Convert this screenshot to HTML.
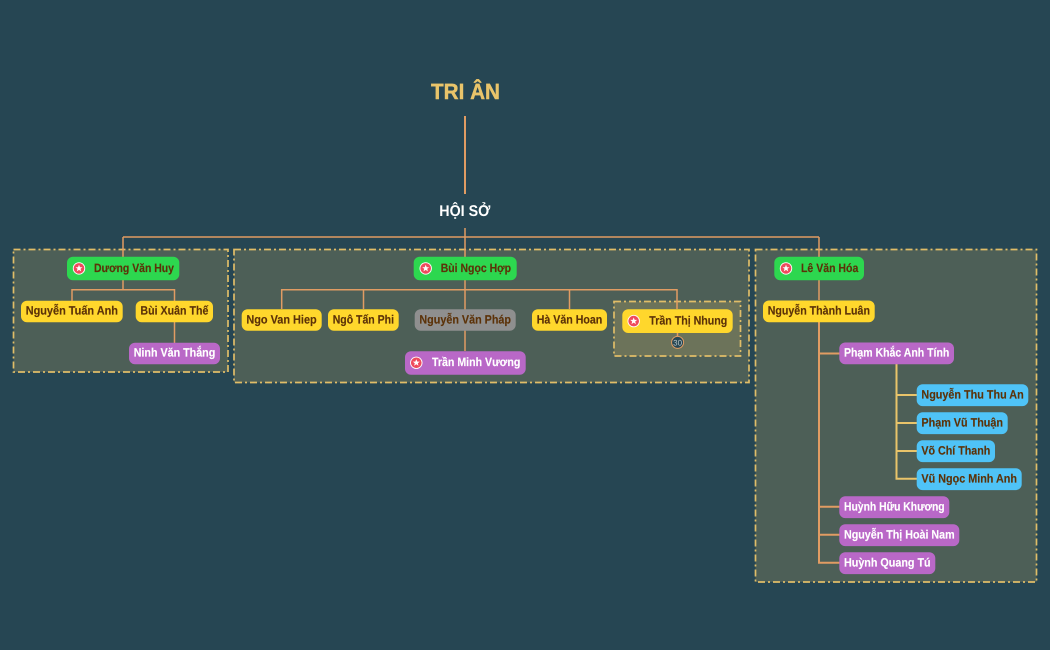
<!DOCTYPE html>
<html lang="vi"><head><meta charset="utf-8"><title>Tri Ân</title>
<style>
html,body{margin:0;padding:0;background:#264653;width:1050px;height:650px;overflow:hidden}
svg{display:block}
text{font-family:"Liberation Sans","DejaVu Sans",sans-serif;font-weight:700;text-rendering:geometricPrecision}
.n{font-size:12px;fill:#5c3208;stroke:#5c3208;stroke-width:.15px}
.w{font-size:12px;fill:#fff;stroke:#fff;stroke-width:.15px}
</style></head><body>
<svg width="1050" height="650" viewBox="0 0 1050 650" xmlns="http://www.w3.org/2000/svg">
<defs>
<g id="ic"><circle r="6.2" fill="#fff"/><circle r="5.300" fill="#ef4a5c"/><polygon points="0,-3.6 1,-1.2 3.500,-1.2 1.500,0.4 2.200,3 0,1.500 -2.200,3 -1.500,0.4 -3.500,-1.2 -1,-1.2" fill="#fff"/></g>
</defs>
<rect width="1050" height="650" fill="#264653"/>

<g fill="#e9c46a" fill-opacity=".2" stroke="#e0bd68" stroke-width="1.700" stroke-dasharray="7 3 2 3">
<rect x="13.500" y="249.500" width="214.500" height="122.500"/>
<rect x="234" y="249.500" width="515" height="133"/>
<rect x="755.500" y="249.500" width="281" height="332.500"/>
<rect x="614" y="301.500" width="126.500" height="54.500"/>
</g>

<g fill="none" stroke="#e19c63" stroke-width="1.500">
<path d="M465 116V194" stroke-width="2"/>
<path d="M465 228V257M123 237H819M123 237V257M819 237V257"/>
<path d="M123 280V290M72 301V289.700H174.500V301M174.500 322V343"/>
<path d="M465 280V351M281.700 309V289.700H677V309M363.500 289.700V309M569.500 289.700V309"/>
<path d="M677.500 333V337"/>
<path d="M819 280V300"/>
<path d="M819 322V562.700H839.500M819 353.500H839.500M819 506.700H839.500M819 534.700H839.500" stroke-width="2"/>
<path d="M896.500 364V478.700H917M896.500 395H917M896.500 423H917M896.500 451H917" stroke="#e9c46a" stroke-width="2"/>
</g>

<text x="431" y="99" font-size="22" fill="#e9c46a" stroke="#e9c46a" stroke-width=".4" textLength="69" lengthAdjust="spacingAndGlyphs">TRI ÂN</text>
<text x="439.300" y="216.200" font-size="15.500" fill="#fff" textLength="51" lengthAdjust="spacingAndGlyphs">HỘI SỞ</text>

<!-- green -->
<g fill="#2dd74f">
<rect x="67" y="256.700" width="112.300" height="23.600" rx="6"/>
<rect x="413.700" y="256.700" width="103" height="23.600" rx="6"/>
<rect x="774.300" y="256.700" width="89.700" height="23.600" rx="6"/>
</g>
<!-- yellow -->
<g fill="#ffd72c">
<rect x="21" y="300.700" width="101.700" height="21.600" rx="6"/>
<rect x="135.700" y="300.700" width="77.300" height="21.600" rx="6"/>
<rect x="241.700" y="309.300" width="80" height="21.400" rx="6"/>
<rect x="328" y="309.300" width="70.700" height="21.400" rx="6"/>
<rect x="532" y="309.300" width="75" height="21.400" rx="6"/>
<rect x="622.300" y="309.300" width="110.400" height="23.700" rx="6"/>
<rect x="763" y="300.500" width="111.700" height="21.800" rx="6"/>
</g>
<rect x="414.700" y="309.300" width="101" height="21.400" rx="6" fill="#8f8f8f"/>
<!-- purple -->
<g fill="#b968c7">
<rect x="129" y="342.700" width="91" height="21.600" rx="6"/>
<rect x="405" y="351.300" width="120.700" height="23.400" rx="6"/>
<rect x="839.300" y="342.500" width="114.700" height="21.800" rx="6"/>
<rect x="839.300" y="496.300" width="110" height="21.800" rx="6"/>
<rect x="839.300" y="524.300" width="120" height="21.800" rx="6"/>
<rect x="839.300" y="552.300" width="96" height="21.800" rx="6"/>
</g>
<!-- blue -->
<g fill="#4fc3f7">
<rect x="916.700" y="384.300" width="111.600" height="21.800" rx="6"/>
<rect x="916.700" y="412.300" width="91" height="21.800" rx="6"/>
<rect x="916.700" y="440.300" width="78.300" height="21.800" rx="6"/>
<rect x="916.700" y="468.300" width="105" height="21.800" rx="6"/>
</g>

<use href="#ic" x="79" y="268.400"/>
<use href="#ic" x="425.700" y="268.400"/>
<use href="#ic" x="786" y="268.400"/>
<use href="#ic" x="633.700" y="321.100"/>
<use href="#ic" x="416.300" y="362.800"/>

<circle cx="677.600" cy="342.400" r="6" fill="#264653" stroke="#e19c63" stroke-width="1"/>
<text x="677.600" y="345.300" font-size="8" fill="#b9c4c6" text-anchor="middle" style="font-weight:400">30</text>

<text class="n" x="94" y="271.800" textLength="80" lengthAdjust="spacingAndGlyphs">Dương Văn Huy</text>
<text class="n" x="440.700" y="271.800" textLength="70.300" lengthAdjust="spacingAndGlyphs">Bùi Ngọc Hợp</text>
<text class="n" x="801" y="271.800" textLength="57.300" lengthAdjust="spacingAndGlyphs">Lê Văn Hóa</text>
<text class="n" x="25.700" y="314.700" textLength="92.300" lengthAdjust="spacingAndGlyphs">Nguyễn Tuấn Anh</text>
<text class="n" x="140.400" y="314.700" textLength="68" lengthAdjust="spacingAndGlyphs">Bùi Xuân Thế</text>
<text class="n" x="246.400" y="323.300" textLength="70.300" lengthAdjust="spacingAndGlyphs">Ngo Van Hiep</text>
<text class="n" x="332.700" y="323.300" textLength="61.300" lengthAdjust="spacingAndGlyphs">Ngô Tấn Phi</text>
<text class="n" x="419.400" y="323.300" textLength="91.600" lengthAdjust="spacingAndGlyphs">Nguyễn Văn Pháp</text>
<text class="n" x="536.700" y="323.300" textLength="65.600" lengthAdjust="spacingAndGlyphs">Hà Văn Hoan</text>
<text class="n" x="649.300" y="324.400" textLength="78" lengthAdjust="spacingAndGlyphs">Trần Thị Nhung</text>
<text class="n" x="767.700" y="314.700" textLength="102.300" lengthAdjust="spacingAndGlyphs">Nguyễn Thành Luân</text>
<text class="n" x="921.400" y="398.500" textLength="102.300" lengthAdjust="spacingAndGlyphs">Nguyễn Thu Thu An</text>
<text class="n" x="921.400" y="426.500" textLength="81.600" lengthAdjust="spacingAndGlyphs">Phạm Vũ Thuận</text>
<text class="n" x="921.400" y="454.500" textLength="68.900" lengthAdjust="spacingAndGlyphs">Võ Chí Thanh</text>
<text class="n" x="921.400" y="482.500" textLength="95.600" lengthAdjust="spacingAndGlyphs">Vũ Ngọc Minh Anh</text>
<text class="w" x="133.700" y="356.700" textLength="81.600" lengthAdjust="spacingAndGlyphs">Ninh Văn Thắng</text>
<text class="w" x="432" y="366.100" textLength="88.300" lengthAdjust="spacingAndGlyphs">Trần Minh Vương</text>
<text class="w" x="844" y="356.700" textLength="105.300" lengthAdjust="spacingAndGlyphs">Phạm Khắc Anh Tính</text>
<text class="w" x="844" y="510.500" textLength="100.600" lengthAdjust="spacingAndGlyphs">Huỳnh Hữu Khương</text>
<text class="w" x="844" y="538.500" textLength="110.600" lengthAdjust="spacingAndGlyphs">Nguyễn Thị Hoài Nam</text>
<text class="w" x="844" y="566.500" textLength="86.600" lengthAdjust="spacingAndGlyphs">Huỳnh Quang Tú</text>
</svg>
</body></html>
